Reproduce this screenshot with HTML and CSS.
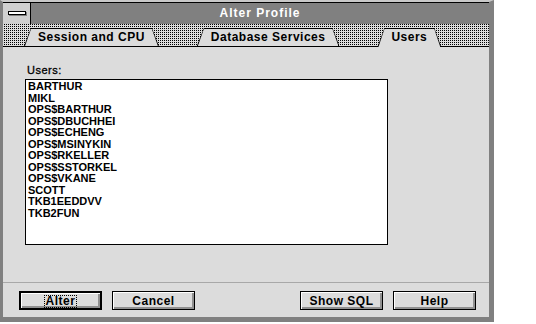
FILE: index.html
```html
<!DOCTYPE html>
<html lang="en">
<head>
  <meta charset="UTF-8">
  <title>Alter Profile</title>
  <link rel="stylesheet" href="styles.css">
</head>
<body>

  <div class="dialog">
    <div class="titlebar">
      <div class="sysmenu"><span class="sysbar"></span></div>
      <div class="title">Alter Profile</div>
    </div>

    <div class="tabs">
      <div class="tab"><span>Session and CPU</span></div>
      <div class="tab"><span>Database Services</span></div>
      <div class="tab active"><span>Users</span></div>
    </div>

    <div class="panel">
      <div class="label">Users:</div>
      <ul class="listbox">
        <li>BARTHUR</li>
        <li>MIKL</li>
        <li>OPS$BARTHUR</li>
        <li>OPS$DBUCHHEI</li>
        <li>OPS$ECHENG</li>
        <li>OPS$MSINYKIN</li>
        <li>OPS$RKELLER</li>
        <li>OPS$SSTORKEL</li>
        <li>OPS$VKANE</li>
        <li>SCOTT</li>
        <li>TKB1EEDDVV</li>
        <li>TKB2FUN</li>
      </ul>

      <div class="footer">
        <div class="group">
          <button class="btn default"><span class="focus">Alter</span></button>
          <button class="btn">Cancel</button>
        </div>
        <div class="group">
          <button class="btn">Show SQL</button>
          <button class="btn">Help</button>
        </div>
      </div>
    </div>
  </div>

</body>
</html>
```

FILE: styles.css
```css
body {
  margin: 0;
  background: #fff;
  font-family: "Liberation Sans", Arial, sans-serif;
  font-weight: bold;
  font-size: 12px;
  color: #000;
}
.dialog {
  width: 494px;
  height: 322px;
  box-sizing: border-box;
  border: 3px solid #808080;
  border-right-width: 5px;
  border-bottom-width: 5px;
  border-top: 2px solid #c8c8c8;
  display: flex;
  flex-direction: column;
  background: #dcdcdc;
}
.titlebar {
  display: flex;
  height: 21px;
  border-top: 1px solid #000;
  background: #808080;
}
.sysmenu {
  width: 27px;
  background: #d0d0d0;
  border-right: 1px solid #000;
  display: flex;
  align-items: center;
  justify-content: center;
}
.sysbar {
  width: 16px;
  height: 2px;
  background: #fff;
  border: 1px solid #000;
  box-shadow: 1px 1px 0 #808080;
  margin-bottom: 2px;
}
.title {
  flex: 1;
  color: #fff;
  text-align: center;
  line-height: 21px;
  letter-spacing: 1px;
}
.tabs {
  height: 22px;
  display: flex;
  align-items: flex-end;
  gap: 38px;
  padding-left: 21px;
  border-bottom: 1px solid #000;
  background: #dcdcdc conic-gradient(#000 0 25%, #dcdcdc 0) 0 0 / 2px 2px;
}
.tab {
  height: 18px;
  background: #000;
  clip-path: polygon(7px 0, calc(100% - 7px) 0, 100% 100%, 0 100%);
}
.tab span {
  display: block;
  height: 17px;
  margin: 1px 1px 0;
  padding: 0 13px;
  line-height: 17px;
  letter-spacing: 0.5px;
  background: #dcdcdc;
  clip-path: polygon(6px 0, calc(100% - 6px) 0, 100% 100%, 0 100%);
}
.tab.active {
  height: 19px;
  margin-bottom: -1px;
}
.tab.active span {
  height: 18px;
}
.panel {
  flex: 1;
  display: flex;
  flex-direction: column;
  padding: 17px 0 0;
}
.label {
  margin-left: 24px;
  line-height: 12px;
  font-size: 11px;
  font-weight: normal;
  -webkit-text-stroke: 0.3px #000;
  letter-spacing: 0.5px;
}
.listbox {
  list-style: none;
  margin: 3px 0 0 22px;
  padding: 1px 0 0 2px;
  width: 359px;
  height: 163px;
  background: #fff;
  border: 1px solid #000;
  font-size: 11px;
  line-height: 11.5px;
}
.footer {
  margin-top: auto;
  border-top: 1px solid #a8a8a8;
  display: flex;
  justify-content: space-between;
  padding: 8px 13px 7px 16px;
}
.group {
  display: flex;
  gap: 10px;
}
.btn {
  width: 83px;
  height: 19px;
  padding: 0;
  font: inherit;
  letter-spacing: 0.5px;
  color: #000;
  background: #dcdcdc;
  border: 1px solid #000;
  box-shadow: inset 1px 1px #fff, inset -2px -2px #909090;
}
.btn.default {
  border-width: 2px;
}
.focus {
  display: inline-block;
  line-height: 11px;
  border: 1px dotted #000;
  padding: 0 1px;
}
```
